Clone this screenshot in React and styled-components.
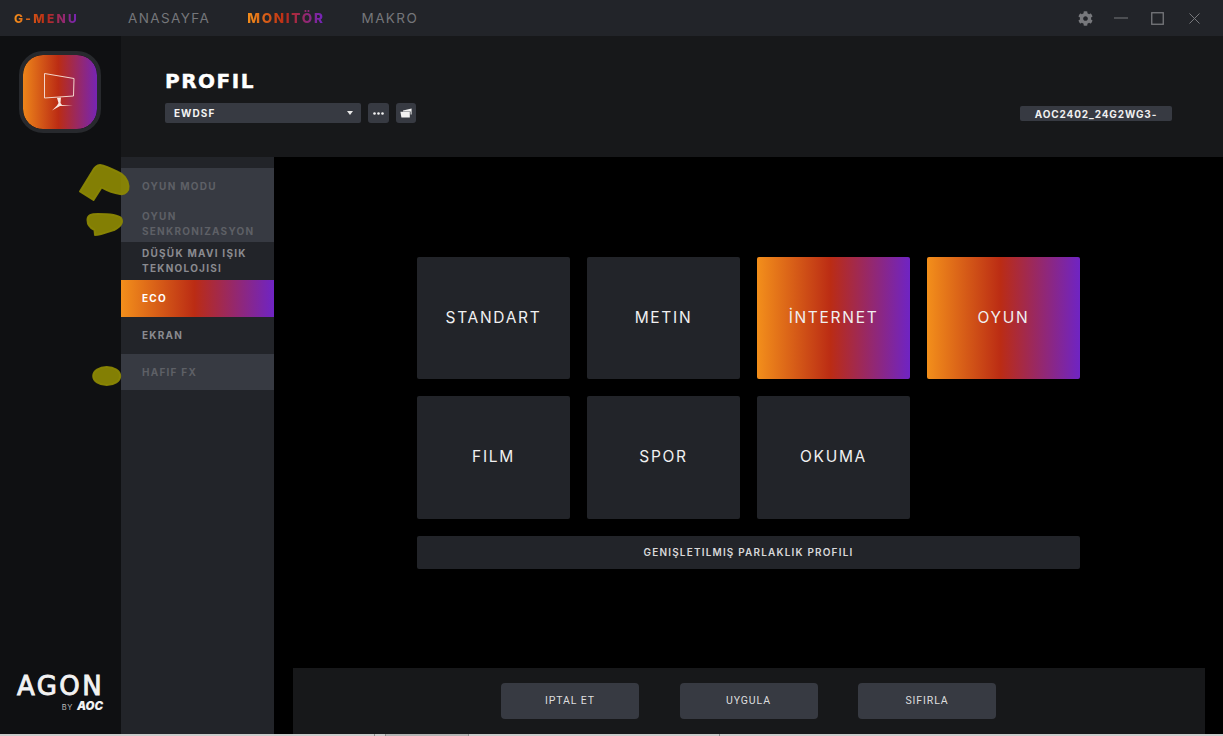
import React from 'react';
import styled, { createGlobalStyle, css } from 'styled-components';
import { FaCog } from 'react-icons/fa';

const BRAND = 'linear-gradient(90deg, #f38f1b 0%, #bb2c14 48%, #6f24c4 100%)';
const FONT = '"Inter", "Liberation Sans", sans-serif';

const GlobalStyle = createGlobalStyle`
  html, body {
    margin: 0;
    padding: 0;
    background: #000;
    overflow: hidden;
  }
`;

const Page = styled.div`
  position: relative;
  width: 1223px;
  height: 736px;
  display: grid;
  grid-template-rows: 36px 1fr 2px;
  font-family: ${FONT};
  overflow: hidden;
`;

const TitleBar = styled.header`
  display: flex;
  align-items: center;
  padding-left: 14px;
  background: #222429;
`;

const gradientText = css`
  background: ${BRAND};
  -webkit-background-clip: text;
  background-clip: text;
  color: transparent;
`;

const Brand = styled.div`
  ${gradientText}
  width: 66px;
  margin-right: 48px;
  font-size: 12px;
  font-weight: 800;
  letter-spacing: 2.3px;
  white-space: nowrap;
`;

const NavItem = styled.div`
  margin-right: 37px;
  font-size: 13.5px;
  font-weight: ${p => (p.$active ? 800 : 400)};
  letter-spacing: ${p => (p.$active ? '1.7px' : '1.4px')};
  color: #75767a;
  white-space: nowrap;
  ${p => p.$active && gradientText}
`;

const WindowControls = styled.div`
  margin-left: auto;
  display: flex;
  align-items: center;
  padding-right: 23px;
  color: #77787c;
`;

const ControlSlot = styled.div`
  display: flex;
  justify-content: center;
  width: ${p => p.$w}px;
  margin-left: ${p => p.$gap}px;
`;

const Body = styled.div`
  display: grid;
  grid-template-columns: 121px 1fr;
  min-height: 0;
`;

const Rail = styled.aside`
  display: flex;
  flex-direction: column;
  align-items: center;
  padding: 15px 1px 20px 0;
  background: #0f1012;
`;

const AppBadge = styled.div`
  width: 74px;
  height: 74px;
  display: flex;
  align-items: center;
  justify-content: center;
  border: 4px solid #27292d;
  border-radius: 24px;
  background: ${BRAND};
  background-origin: border-box;
  background-clip: padding-box;
`;

const AgonLogo = styled.div`
  margin-top: auto;
  width: 86px;
  color: #f2f2f2;
`;

const AgonWord = styled.div`
  font-family: "DejaVu Sans", sans-serif;
  font-size: 26px;
  line-height: 24px;
  font-weight: 400;
  letter-spacing: 2.4px;
  -webkit-text-stroke: 0.9px #f2f2f2;
`;

const ByLine = styled.div`
  display: flex;
  justify-content: flex-end;
  align-items: baseline;
  gap: 4px;
  margin-top: 2px;
  font-size: 7.5px;
  line-height: 12px;
  letter-spacing: 0.6px;
  color: #bdbdbd;

  b {
    font-size: 11.5px;
    font-weight: 900;
    font-style: italic;
    letter-spacing: 0;
    color: #f2f2f2;
  }
`;

const Content = styled.div`
  display: grid;
  grid-template-rows: 121px 1fr;
  min-height: 0;
`;

const ProfileHeader = styled.section`
  display: flex;
  align-items: flex-end;
  justify-content: space-between;
  padding: 0 51px 34px 44px;
  background: #17181a;
`;

const ProfileTitle = styled.h1`
  margin: 0 0 12px;
  font-family: "DejaVu Sans", sans-serif;
  font-size: 20px;
  line-height: 20px;
  font-weight: 700;
  letter-spacing: 1.5px;
  -webkit-text-stroke: 0.4px #fff;
  color: #fff;
`;

const ProfileControls = styled.div`
  display: flex;
  gap: 7px;
`;

const Select = styled.div`
  width: 196px;
  height: 20px;
  display: flex;
  align-items: center;
  justify-content: space-between;
  box-sizing: border-box;
  padding: 0 8px 0 9px;
  border-radius: 2px;
  background: #373a42;
  font-size: 10px;
  font-weight: 700;
  letter-spacing: 1.05px;
  color: #f4f4f4;
`;

const Caret = styled.span`
  width: 0;
  height: 0;
  border-left: 3px solid transparent;
  border-right: 3px solid transparent;
  border-top: 4px solid #e8e8e8;
`;

const IconButton = styled.div`
  width: ${p => p.$w}px;
  height: 20px;
  display: flex;
  align-items: center;
  justify-content: center;
  border-radius: 3px;
  background: #373a42;
`;

const DeviceChip = styled.div`
  width: 152px;
  height: 15px;
  margin-bottom: 2px;
  display: flex;
  align-items: center;
  justify-content: center;
  border-radius: 2px;
  background: #373a42;
  font-size: 10px;
  font-weight: 700;
  letter-spacing: 0.88px;
  color: #f0f0f0;
`;

const Lower = styled.div`
  display: grid;
  grid-template-columns: 153px 1fr;
  min-height: 0;
`;

const SideMenu = styled.nav`
  padding-top: 11px;
  background: #222429;
`;

const SideItem = styled.div`
  height: ${p => p.$h || 37}px;
  display: flex;
  align-items: center;
  box-sizing: border-box;
  padding: 0 20px 0 21px;
  font-size: 10px;
  line-height: 15px;
  font-weight: 700;
  letter-spacing: 1.25px;
  color: #8a8b90;
  ${p => p.$disabled && css`
    background: #373a42;
    color: #5e6066;
  `}
  ${p => p.$active && css`
    background: ${BRAND};
    color: #fff;
  `}
`;

const SideLabel = styled.span`
  display: block;
  width: 100%;
  overflow: hidden;
`;

const Main = styled.main`
  display: flex;
  flex-direction: column;
  min-height: 0;
  background: #000;
`;

const ModeArea = styled.div`
  padding: 100px 0 0 143px;
`;

const ModeGrid = styled.div`
  display: grid;
  grid-template-columns: repeat(4, 153px);
  grid-template-rows: 122px 123px;
  gap: 17px;
`;

const ModeTile = styled.div`
  display: flex;
  align-items: center;
  justify-content: center;
  padding-bottom: 2px;
  border-radius: 2px;
  background: ${p => (p.$active ? BRAND : '#222429')};
  font-size: 15.5px;
  font-weight: 400;
  letter-spacing: 1.7px;
  color: #f0f0f1;
`;

const WideButton = styled.div`
  width: 663px;
  height: 33px;
  margin-top: 17px;
  display: flex;
  align-items: center;
  justify-content: center;
  box-sizing: border-box;
  padding-bottom: 2px;
  border-radius: 2px;
  background: #222429;
  font-size: 10px;
  font-weight: 600;
  letter-spacing: 1.18px;
  color: #d8d8d9;
`;

const Footer = styled.footer`
  height: 66px;
  margin: auto 18px 0 19px;
  display: flex;
  align-items: center;
  justify-content: center;
  gap: 40.5px;
  box-sizing: border-box;
  padding-right: 1px;
  background: #17181a;
`;

const FooterButton = styled.div`
  width: 138px;
  height: 36px;
  display: flex;
  align-items: center;
  justify-content: center;
  box-sizing: border-box;
  padding-bottom: 1px;
  border-radius: 4px;
  background: #373a42;
  font-family: "Roboto", sans-serif;
  font-size: 10.5px;
  font-weight: 400;
  letter-spacing: 0.9px;
  color: #dededf;
`;

const Taskbar = styled.div`
  display: flex;
  background: #cbcbcb;
`;

const TaskGap = styled.div`
  width: ${p => p.$w}px;
  box-sizing: border-box;
  border-right: 1px solid #8e8e8e;
  ${p => p.$open && 'background: #b4b4b4;'}
`;

const Scribbles = styled.svg`
  position: absolute;
  left: 0;
  top: 0;
  width: 200px;
  height: 400px;
  pointer-events: none;
`;

const MonitorIcon = () => (
  <svg width="34" height="40" viewBox="0 0 34 40" fill="none" style={{ marginLeft: -3 }}>
    <path d="M2.5 1.5 L32 6.5 L31.5 24 L2.5 26 Z" stroke="#f3d5cb" />
    <path d="M15 26 L19 25.5 L18.5 31 L20 33 L31 33.5 L18 34 L10 38.5 L15 33.5 L16.5 31 Z" fill="#f8e6e0" />
  </svg>
);

const FolderIcon = () => (
  <svg width="12" height="10" viewBox="0 0 12 10">
    <path d="M3 2.4 L11.6 0.6 L11.6 6.5 L10.6 6.5 L10.6 3.4 L3 3.4 Z" fill="#f2f2f2" />
    <path d="M0.4 3.8 L9.8 3.8 L9.8 9.4 L1.4 9.4 Z" fill="#f2f2f2" />
  </svg>
);

const DotsIcon = () => (
  <svg width="11" height="3" viewBox="0 0 11 3" fill="#f2f2f2">
    <circle cx="1.5" cy="1.5" r="1.3" />
    <circle cx="5.5" cy="1.5" r="1.3" />
    <circle cx="9.5" cy="1.5" r="1.3" />
  </svg>
);

const MODES = [
  { name: 'STANDART' },
  { name: 'METIN' },
  { name: 'İNTERNET', active: true },
  { name: 'OYUN', active: true },
  { name: 'FILM' },
  { name: 'SPOR' },
  { name: 'OKUMA' },
];

const App = () => (
  <Page>
    <GlobalStyle />
    <TitleBar>
      <Brand>G-MENU</Brand>
      <NavItem>ANASAYFA</NavItem>
      <NavItem $active>MONITÖR</NavItem>
      <NavItem>MAKRO</NavItem>
      <WindowControls>
        <ControlSlot $w={15}>
          <FaCog size={15} />
        </ControlSlot>
        <ControlSlot $w={14} $gap={21}>
          <svg width="14" height="14" viewBox="0 0 14 14"><path d="M0 7 H14" stroke="currentColor" /></svg>
        </ControlSlot>
        <ControlSlot $w={13} $gap={23}>
          <svg width="13" height="13" viewBox="0 0 13 13" fill="none"><rect x="0.75" y="0.75" width="11.5" height="11.5" stroke="currentColor" strokeWidth="1.3" /></svg>
        </ControlSlot>
        <ControlSlot $w={11} $gap={25}>
          <svg width="11" height="11" viewBox="0 0 11 11" fill="none"><path d="M0.5 0.5 L10.5 10.5 M10.5 0.5 L0.5 10.5" stroke="currentColor" /></svg>
        </ControlSlot>
      </WindowControls>
    </TitleBar>

    <Body>
      <Rail>
        <AppBadge>
          <MonitorIcon />
        </AppBadge>
        <AgonLogo>
          <AgonWord>AGON</AgonWord>
          <ByLine>BY <b>AOC</b></ByLine>
        </AgonLogo>
      </Rail>

      <Content>
        <ProfileHeader>
          <div>
            <ProfileTitle>PROFIL</ProfileTitle>
            <ProfileControls>
              <Select>EWDSF<Caret /></Select>
              <IconButton $w={21}><DotsIcon /></IconButton>
              <IconButton $w={20}><FolderIcon /></IconButton>
            </ProfileControls>
          </div>
          <DeviceChip>AOC2402_24G2WG3-</DeviceChip>
        </ProfileHeader>

        <Lower>
          <SideMenu>
            <SideItem $disabled><SideLabel>OYUN MODU</SideLabel></SideItem>
            <SideItem $disabled><SideLabel>OYUN SENKRONIZASYONU</SideLabel></SideItem>
            <SideItem $h={38}><SideLabel>DÜŞÜK MAVI IŞIK TEKNOLOJISI</SideLabel></SideItem>
            <SideItem $active><SideLabel>ECO</SideLabel></SideItem>
            <SideItem><SideLabel>EKRAN</SideLabel></SideItem>
            <SideItem $disabled $h={36}><SideLabel>HAFIF FX</SideLabel></SideItem>
          </SideMenu>

          <Main>
            <ModeArea>
              <ModeGrid>
                {MODES.map(m => (
                  <ModeTile key={m.name} $active={m.active}>{m.name}</ModeTile>
                ))}
              </ModeGrid>
              <WideButton>GENIŞLETILMIŞ PARLAKLIK PROFILI</WideButton>
            </ModeArea>
            <Footer>
              <FooterButton>IPTAL ET</FooterButton>
              <FooterButton>UYGULA</FooterButton>
              <FooterButton>SIFIRLA</FooterButton>
            </Footer>
          </Main>
        </Lower>
      </Content>
    </Body>

    <Taskbar>
      <TaskGap $w={375} />
      <TaskGap $w={11} />
      <TaskGap $w={83} $open />
      <TaskGap $w={251} />
    </Taskbar>

    <Scribbles viewBox="0 0 200 400">
      <g fill="#8a8604" stroke="#8a8604" strokeWidth="2" strokeLinejoin="round" fillOpacity="0.95" strokeOpacity="0.95">
        <path d="M80 191.5 L93.5 200 L101.5 187.5 C106 190 112 193 120 194 C126 195 129 190 128.5 186 C128 179 123 174 118 172 C112 169 106 166 100 165 C96 165 94 168 92 172 Z" />
        <path d="M87.5 220 C87.5 215 91 214 98 214 C108 214 118 215 121 218 C123.5 222 121 227 114 230 C108 232 100 235 95 235 L94.5 230 C90 228 87.5 225 87.5 220 Z" />
        <ellipse cx="106.7" cy="376" rx="13.5" ry="9" />
      </g>
    </Scribbles>
  </Page>
);

export default App;
